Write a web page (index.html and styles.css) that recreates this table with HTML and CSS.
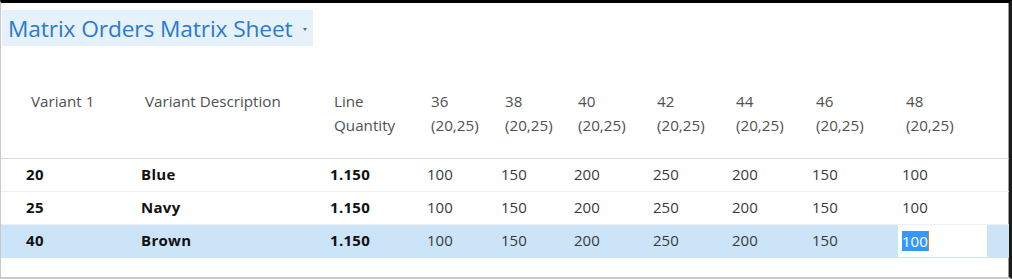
FILE: index.html
```html
<!DOCTYPE html>
<html>
<head>
<meta charset="utf-8">
<link rel="stylesheet" href="styles.css">
</head>
<body>
<div class="frame">
  <div class="title-bar">
    <span class="title">Matrix Orders Matrix Sheet</span>
    <span class="caret"></span>
  </div>
  <div class="grid">
    <div class="row head">
      <div class="cell first">Variant 1</div>
      <div class="cell">Variant Description</div>
      <div class="cell">Line<br>Quantity</div>
      <div class="cell">36<br>(20,25)</div>
      <div class="cell">38<br>(20,25)</div>
      <div class="cell">40<br>(20,25)</div>
      <div class="cell">42<br>(20,25)</div>
      <div class="cell">44<br>(20,25)</div>
      <div class="cell">46<br>(20,25)</div>
      <div class="cell">48<br>(20,25)</div>
      <div class="cell"></div>
    </div>
    <div class="row data">
      <div class="cell first b">20</div>
      <div class="cell b">Blue</div>
      <div class="cell b">1.150</div>
      <div class="cell">100</div>
      <div class="cell">150</div>
      <div class="cell">200</div>
      <div class="cell">250</div>
      <div class="cell">200</div>
      <div class="cell">150</div>
      <div class="cell">100</div>
      <div class="cell"></div>
    </div>
    <div class="row data">
      <div class="cell first b">25</div>
      <div class="cell b">Navy</div>
      <div class="cell b">1.150</div>
      <div class="cell">100</div>
      <div class="cell">150</div>
      <div class="cell">200</div>
      <div class="cell">250</div>
      <div class="cell">200</div>
      <div class="cell">150</div>
      <div class="cell">100</div>
      <div class="cell"></div>
    </div>
    <div class="row data selected">
      <div class="cell first b">40</div>
      <div class="cell b">Brown</div>
      <div class="cell b">1.150</div>
      <div class="cell">100</div>
      <div class="cell">150</div>
      <div class="cell">200</div>
      <div class="cell">250</div>
      <div class="cell">200</div>
      <div class="cell">150</div>
      <div class="cell edit"><span class="sel">100</span><span class="cursor"></span></div>
      <div class="cell"></div>
    </div>
  </div>
</div>
</body>
</html>
```

FILE: styles.css
```css
html, body {
  margin: 0;
  padding: 0;
  background: #ffffff;
}

.frame {
  box-sizing: border-box;
  width: 1012px;
  height: 279px;
  border-top: 3px solid #000000;
  border-left: 1px solid #c8c8c8;
  border-right: 3px solid #1a1a1a;
  border-bottom: 2px solid #c8c8c8;
  box-shadow: inset -1px 0 0 #9a9a9a;
  font-family: "Open Sans", "Noto Sans", sans-serif;
  overflow: hidden;
}

.title-bar {
  display: inline-flex;
  align-items: center;
  margin-top: 7px;
  margin-left: 1px;
  height: 36px;
  padding: 0 6px 0 6px;
  background: #e5f1fb;
}

.title {
  font-size: 22.7px;
  color: #2a7ad0;
  letter-spacing: -0.1px;
}

.caret {
  margin-left: 10px;
  margin-top: 2px;
  width: 0;
  height: 0;
  border-left: 2.5px solid transparent;
  border-right: 2.5px solid transparent;
  border-top: 3px solid #666666;
}

.grid {
  margin-top: 39px;
}

.row {
  display: grid;
  grid-template-columns: 136px 189px 97px 74px 73px 79px 79px 80px 90px 89px 1fr;
}

.cell {
  padding-left: 4px;
  white-space: nowrap;
}

.cell.first {
  padding-left: 25px;
}

.head {
  box-sizing: border-box;
  height: 74px;
  padding-top: 4px;
  border-bottom: 1px solid #d8d8d8;
  font-size: 15.2px;
  line-height: 24px;
  color: #505050;
}

.head .cell {
  padding-left: 8px;
}

.head .cell.first {
  padding-left: 30px;
}

.data {
  box-sizing: border-box;
  height: 33px;
  border-bottom: 1px solid #f0f0f0;
  font-size: 15px;
  line-height: 31px;
  color: #3a3a3a;
}

.data .b {
  font-weight: bold;
  letter-spacing: 0.3px;
  color: #111111;
}

.selected {
  background: #cce4f7;
  border-bottom-color: #cce4f7;
}

.edit {
  background: #ffffff;
  display: flex;
  align-items: center;
}

.sel {
  background: #3399ff;
  color: #ffffff;
  line-height: 20px;
  height: 20px;
}

.cursor {
  width: 1px;
  height: 20px;
  background: #d08030;
}
```
